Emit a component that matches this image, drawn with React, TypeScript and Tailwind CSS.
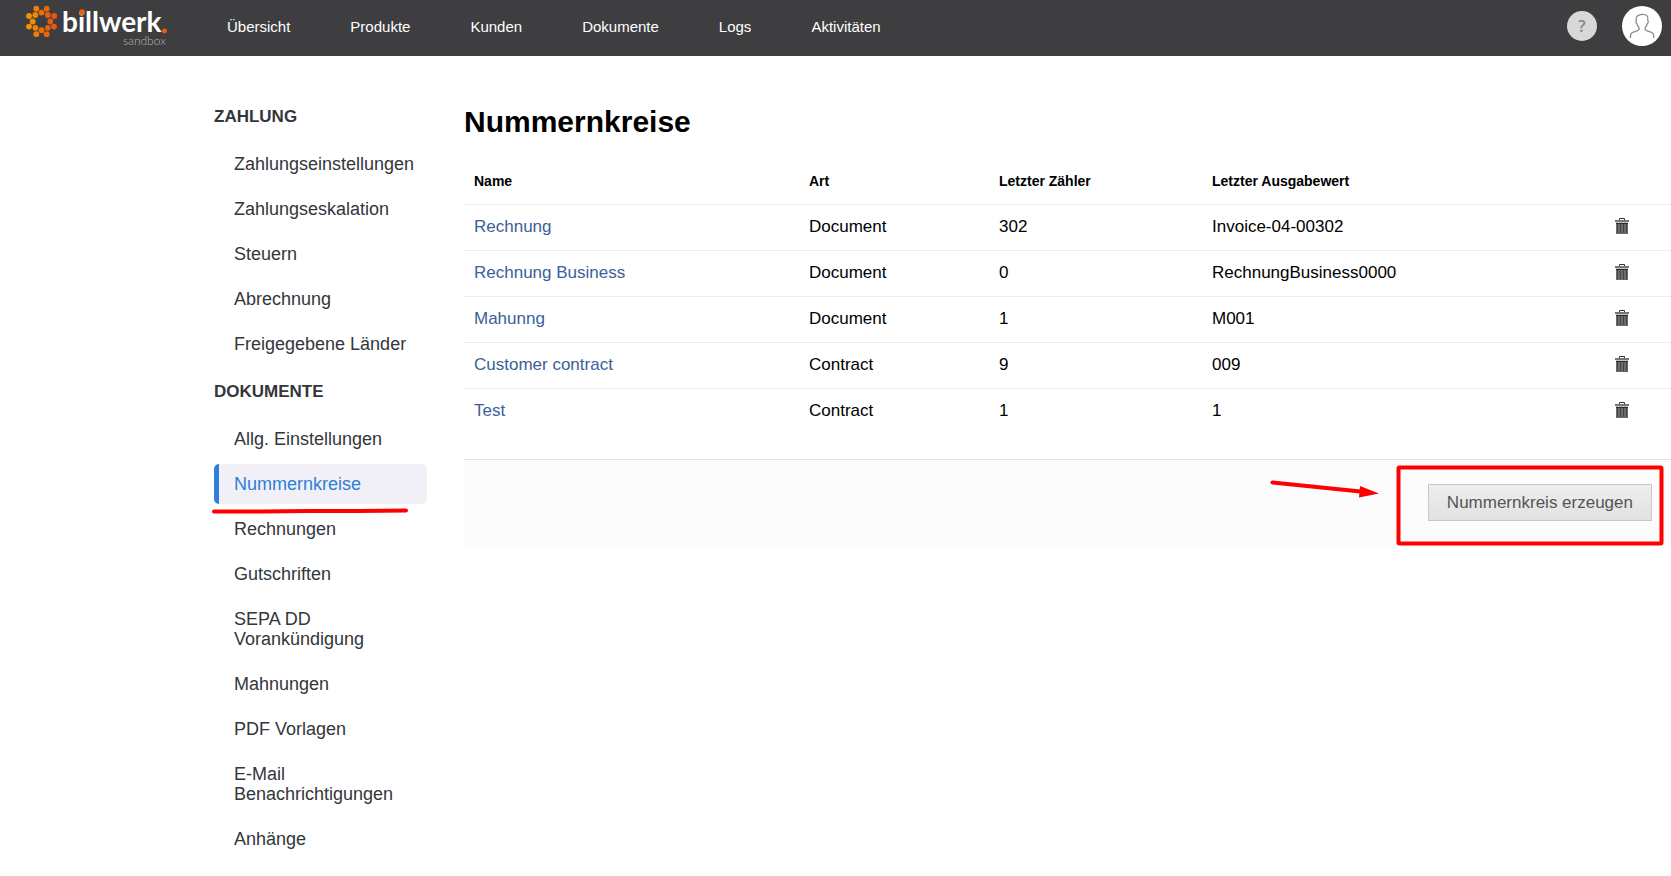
interface NumberRange {
  name: string
  type: string
  counter: string
  output: string
}

const NAV_ITEMS = ['Übersicht', 'Produkte', 'Kunden', 'Dokumente', 'Logs', 'Aktivitäten']

const SIDEBAR_SECTIONS = [
  {
    title: 'ZAHLUNG',
    items: ['Zahlungseinstellungen', 'Zahlungseskalation', 'Steuern', 'Abrechnung', 'Freigegebene Länder'],
  },
  {
    title: 'DOKUMENTE',
    items: [
      'Allg. Einstellungen',
      'Nummernkreise',
      'Rechnungen',
      'Gutschriften',
      'SEPA DD Vorankündigung',
      'Mahnungen',
      'PDF Vorlagen',
      'E-Mail Benachrichtigungen',
      'Anhänge',
    ],
  },
]

const ACTIVE_ITEM = 'Nummernkreise'

const NUMBER_RANGES: NumberRange[] = [
  { name: 'Rechnung', type: 'Document', counter: '302', output: 'Invoice-04-00302' },
  { name: 'Rechnung Business', type: 'Document', counter: '0', output: 'RechnungBusiness0000' },
  { name: 'Mahunng', type: 'Document', counter: '1', output: 'M001' },
  { name: 'Customer contract', type: 'Contract', counter: '9', output: '009' },
  { name: 'Test', type: 'Contract', counter: '1', output: '1' },
]

// Logo dots: x, y, color
const LOGO_DOTS: [number, number, string][] = [
  [36.3, 8.7, '#ee7d08'],
  [46.7, 8.7, '#e9650d'],
  [41.5, 12.6, '#ec7009'],
  [29, 16, '#f39200'],
  [35.3, 15, '#f08505'],
  [47.8, 15, '#e9600d'],
  [54.2, 16, '#e8560f'],
  [32.7, 21.5, '#f18b03'],
  [50.3, 21.5, '#e85c0e'],
  [29, 26.6, '#f39200'],
  [35.4, 27.8, '#f08505'],
  [47.8, 27.8, '#e9600d'],
  [54, 26.6, '#e8560f'],
  [41.5, 30.2, '#ec7009'],
  [36.3, 34.2, '#ee7d08'],
  [46.7, 34.2, '#e9650d'],
]

function Logo() {
  return (
    <svg width="154" height="56" viewBox="20 0 154 56" role="img" aria-label="billwerk sandbox">
      {LOGO_DOTS.map(([x, y, color]) => (
        <circle key={`${x}-${y}`} cx={x} cy={y} r="2.9" fill={color} />
      ))}
      <text className="font-['Lato',sans-serif]">
        <tspan x="62" y="32" className="fill-white text-[28px] font-bold">
          billwerk
        </tspan>
        <tspan x="123" y="45" className="fill-[#b5b5b5] text-[12px] font-light">
          sandbox
        </tspan>
      </text>
      <circle cx="82" cy="12.2" r="2.900" fill="#e8600d" />
      <circle cx="164.5" cy="31" r="2.4" fill="#e8600d" />
    </svg>
  )
}

function UserIcon() {
  return (
    <svg width="26" height="26" viewBox="0 0 26 26" fill="none" stroke="#8a8a8c" strokeWidth="1.3" aria-hidden="true">
      <path d="M1.5 25v-2.2c0-2.2 1.2-3.3 3.4-3.9 2.2-.6 4.7-1 5.2-2.3.3-.9 0-1.8-.6-2.8-.9-1-1.3-2-1.5-3-1.2-.6-1.4-2.8-.6-3.3-.5-3 .6-5 2.8-5.4C12 .9 16 1 17.7 2.5c1.3 1.2 1.5 3 1.1 5 .8.5.5 2.7-.6 3.3-.2 1-.7 2-1.5 3-.6 1-.9 1.9-.6 2.8.6 1.3 3 1.7 5.2 2.3 2.2.6 3.4 1.7 3.4 3.9V25" />
    </svg>
  )
}

function TrashIcon() {
  return (
    <svg width="14" height="18" viewBox="0 0 14 18" aria-hidden="true">
      <path d="M4.5 2.500v-2h5v2" fill="none" stroke="#333" />
      <rect x="0" y="2" width="14" height="2" fill="#777" />
      <rect x="1" y="4" width="12" height="12" fill="#6b6b6b" />
      <rect x="1" y="4" width="12" height="1" fill="#c4c4c4" />
      <rect x="1" y="5" width="12" height="1" fill="#2b2b2b" />
      <path d="M2.5 6v9M5.5 6v9M8.5 6v9M11.5 6v9" stroke="#444" />
    </svg>
  )
}

function Header() {
  return (
    <header className="flex h-14 items-center bg-[#3e3e40] pr-[9px] pl-5 text-[15px] text-white">
      <a href="#" className="shrink-0">
        <Logo />
      </a>
      <nav className="ml-[53px] flex gap-[60px] pb-0.5 leading-5">
        {NAV_ITEMS.map(item => (
          <a key={item} href="#">
            {item}
          </a>
        ))}
      </nav>
      <div className="ml-auto flex items-center gap-[25px] pb-1">
        <button
          aria-label="Hilfe"
          className="flex size-[30px] items-center justify-center rounded-full bg-[#d8d8d8] font-['Open_Sans',sans-serif] text-base font-semibold text-[#858585]"
        >
          ?
        </button>
        <button aria-label="Benutzerkonto" className="flex size-10 items-center justify-center rounded-full bg-white">
          <UserIcon />
        </button>
      </div>
    </header>
  )
}

function Sidebar() {
  return (
    <nav className="flex w-[213px] shrink-0 flex-col gap-[5px] text-lg leading-5 text-[#33363a]">
      {SIDEBAR_SECTIONS.map(section => (
        <div key={section.title} className="flex flex-col gap-[5px]">
          <h2 className="flex h-[45px] items-center text-[17px] font-bold">{section.title}</h2>
          {section.items.map(item => (
            <a
              key={item}
              href="#"
              className={`relative rounded-[5px] border-l-[5px] py-2.5 pr-2 pl-[15px] ${
                item === ACTIVE_ITEM ? 'border-[#2f7ed8] bg-[#f1f0f6] text-[#2f7ed8]' : 'border-transparent'
              }`}
            >
              {item}
              {/* Marker line */}
              {item === ACTIVE_ITEM && (
                <svg className="absolute top-[43px] -left-2" width="200" height="8" viewBox="0 0 200 8" aria-hidden="true">
                  <path d="M3 4.500h48l48-.5h48l48-.5" fill="none" stroke="#fe0000" strokeWidth="4" strokeLinecap="round" />
                </svg>
              )}
            </a>
          ))}
        </div>
      ))}
    </nav>
  )
}

function RangeTable() {
  return (
    <table className="w-full table-fixed text-left text-[17px] leading-5">
      <thead>
        <tr className="h-[46px] text-sm">
          <th className="w-[335px] px-2.5 font-bold">Name</th>
          <th className="w-[190px] px-2.5 font-bold">Art</th>
          <th className="w-[213px] px-2.5 font-bold">Letzter Zähler</th>
          <th className="px-2.5 font-bold">Letzter Ausgabewert</th>
          <th className="w-[66px]" aria-label="Aktionen" />
        </tr>
      </thead>
      <tbody>
        {NUMBER_RANGES.map(range => (
          <tr key={range.name} className="h-[46px] border-t border-[#ededed]">
            <td className="px-2.5">
              <a href="#" className="text-[#3c6098]">
                {range.name}
              </a>
            </td>
            <td className="px-2.5">{range.type}</td>
            <td className="px-2.5">{range.counter}</td>
            <td className="px-2.5">{range.output}</td>
            <td className="px-2.5">
              <button aria-label={`${range.name} löschen`} className="block">
                <TrashIcon />
              </button>
            </td>
          </tr>
        ))}
      </tbody>
    </table>
  )
}

export default function App() {
  return (
    <div className="min-h-screen bg-white font-['Liberation_Sans',Arial,sans-serif] text-black">
      <Header />
      <div className="flex gap-[37px] pt-[38px] pl-[214px]">
        <Sidebar />
        <main className="min-w-0 flex-1">
          <h1 className="pt-2 pb-4 text-[30px] leading-10 font-bold">Nummernkreise</h1>
          <RangeTable />
          <div className="relative mt-[25px] flex justify-end border-t border-[#e2e2e2] bg-[#fcfcfc] pt-6 pr-[19px] pb-[25px]">
            <button className="h-[37px] border border-[#c8c8c8] bg-linear-to-b from-[#eeeeee] to-[#e2e2e2] px-[18px] text-[17px] leading-5 text-[#555]">
              Nummernkreis erzeugen
            </button>
            {/* Arrow and frame around the create button */}
            <svg
              className="pointer-events-none absolute top-0 right-0"
              width="411"
              height="88"
              viewBox="0 0 411 88"
              fill="none"
              stroke="#fe0000"
              aria-hidden="true"
            >
              <rect x="138.5" y="7.5" width="263" height="76" rx="1" strokeWidth="4" />
              <path d="M12.5 22.5l88 9" strokeWidth="4" strokeLinecap="round" />
              <path d="M100 26l19 7.5-20 4z" fill="#fe0000" stroke="none" />
            </svg>
          </div>
        </main>
      </div>
    </div>
  )
}
